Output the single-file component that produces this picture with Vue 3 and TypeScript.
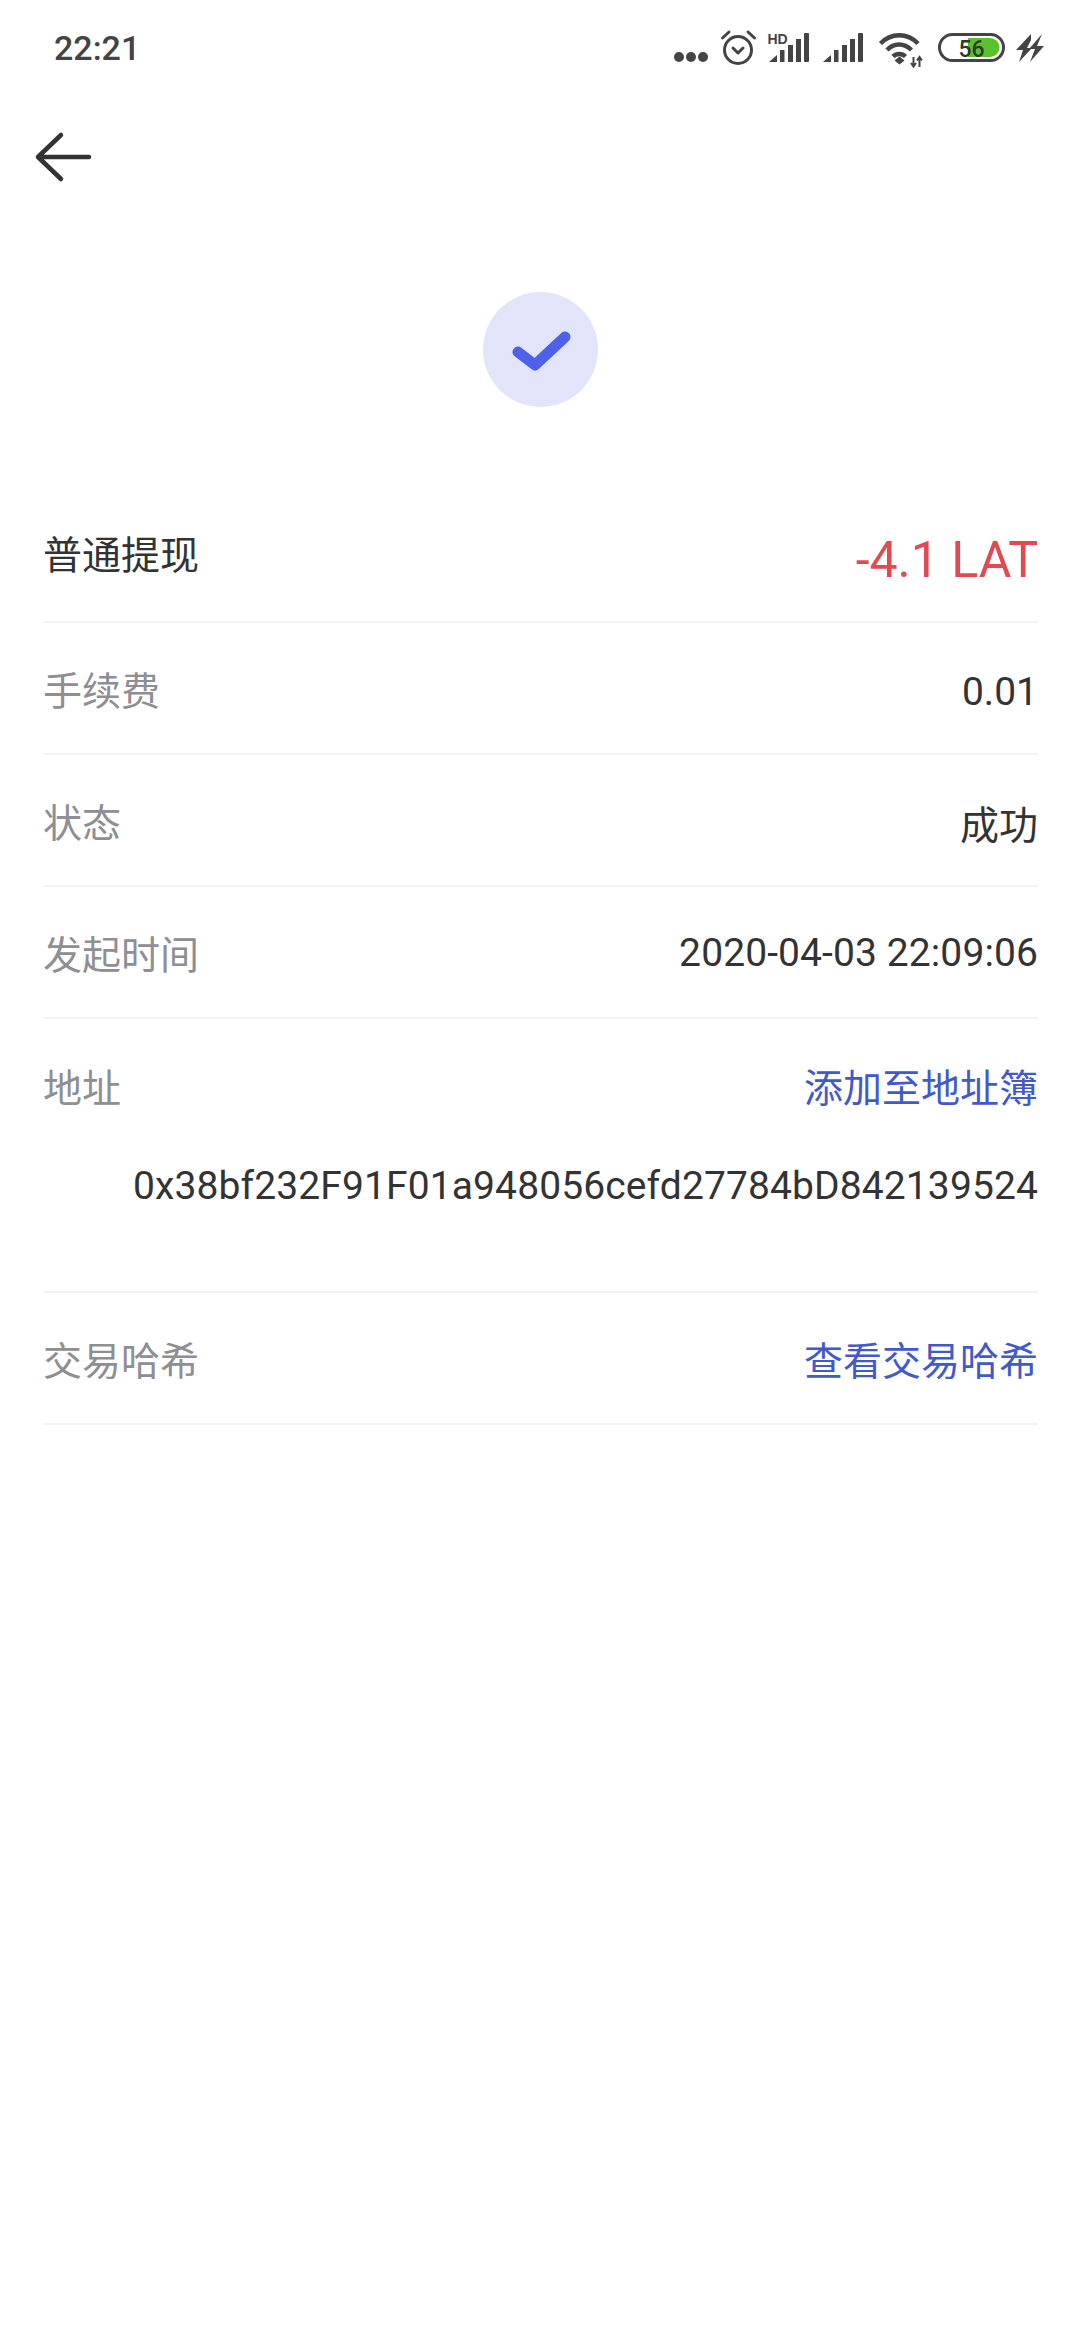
<script setup lang="ts">
interface Row { label: string; value: string; cls: string }
const rows: Row[] = [
  { label: '手续费', value: '0.01', cls: 'fee' },
  { label: '状态', value: '成功', cls: 'state' },
  { label: '发起时间', value: '2020-04-03 22:09:06', cls: 'date' },
]
</script>

<template>
  <div class="page">
    <header class="status">
      <span class="time">22:21</span>
      <svg class="status-icons" width="400" height="60" viewBox="660 18 400 60">
        <g fill="#444">
          <circle cx="679" cy="57" r="5" /><circle cx="691" cy="57" r="5" /><circle cx="703" cy="57" r="5" />
        </g>
        <g fill="none" stroke="#444" stroke-width="3" stroke-linecap="round" stroke-linejoin="round">
          <circle cx="738" cy="50" r="13.500" />
          <path d="M733 48l5 5 5-5" />
          <path d="M722.500 38l6.500-6M754.500 38l-6.500-6" />
        </g>
        <text x="767.500" y="44" class="hd">HD</text>
        <g fill="#444">
          <path d="M769 62l8-7v7z" /><rect x="780" y="50" width="4.500" height="12" /><rect x="788" y="45" width="5" height="17" /><rect x="796" y="39" width="5" height="23" /><rect x="804" y="33" width="5" height="29" rx="1" />
          <path d="M823 62l8-7v7z" /><rect x="834" y="50" width="4.500" height="12" /><rect x="842" y="45" width="5" height="17" /><rect x="850" y="39" width="5" height="23" /><rect x="858" y="33" width="5" height="29" rx="1" />
        </g>
        <g fill="none" stroke="#444" stroke-width="4.500">
          <path d="M880.500 43.500c10.500-11 27-11 37.500 0" />
          <path d="M887 50c7-7.500 17-7.500 24.500 0" />
          <path d="M893 56.500c3.500-3.500 9-3.500 12.500 0" />
        </g>
        <path d="M899.500 56.500l5 4-5 4-5-4z" fill="#444" />
        <path d="M913.500 57v10M919.500 57v10M911 63l2.500 3.500 2.500-3.500M917 60.500l2.500-3.500 2.500 3.500" fill="none" stroke="#444" stroke-width="2" />
        <rect x="939.500" y="34.500" width="64" height="26" rx="13" fill="#fff" stroke="#444" stroke-width="3" />
        <path d="M968 38h22a9.500 9.500 0 0 1 0 19h-22z" fill="#5cc22c" />
        <text x="958.500" y="57" class="batt">56</text>
        <path d="M1031 34l-15 16h7l-4 12 13-14h-5l4-8zM1042 34l-13 15h6l-5 13 14-16h-7z" fill="#444" />
      </svg>
    </header>

    <div class="nav">
      <svg width="60" height="52" viewBox="0 0 60 52" fill="none" stroke="#333" stroke-width="4.500" stroke-linecap="round" stroke-linejoin="round">
        <path d="M55 26H4M27 4L4 26 27 48" />
      </svg>
    </div>

    <div class="result">
      <div class="circle">
        <svg width="62" height="44" viewBox="0 0 62 44" fill="none" stroke="#4f60ea" stroke-width="11" stroke-linecap="round" stroke-linejoin="round">
          <path d="M8 24l17 13L55 9" />
        </svg>
      </div>
    </div>

    <main class="list">
      <div class="row">
        <span class="title">普通提现</span>
        <span class="amount">-4.1 LAT</span>
      </div>
      <div v-for="r in rows" :key="r.label" class="row">
        <span class="label">{{ r.label }}</span>
        <span class="value" :class="r.cls">{{ r.value }}</span>
      </div>
      <div class="row tall">
        <div class="line">
          <span class="label">地址</span>
          <span class="link">添加至地址簿</span>
        </div>
        <div class="address">0x38bf232F91F01a948056cefd27784bD842139524</div>
      </div>
      <div class="row">
        <span class="label">交易哈希</span>
        <span class="link">查看交易哈希</span>
      </div>
    </main>
  </div>
</template>

<style scoped>
.page {
  width: 1080px;
  height: 2340px;
  background: #fff;
  font-family: Roboto, "Noto Sans CJK SC", sans-serif;
  overflow: hidden;
}
.status {
  height: 96px;
  display: flex;
  align-items: center;
  justify-content: space-between;
  padding: 0 20px 0 54px;
  box-sizing: border-box;
}
.time {
  font-size: 34px;
  font-weight: 500;
  color: #444;
}
.status-icons { display: block; }
.hd { font: 700 14px "Liberation Sans", sans-serif; fill: #444; }
.batt { font: 500 23px Roboto, sans-serif; fill: #2c3a2a; }
.nav {
  height: 122px;
  padding-left: 34px;
  display: flex;
  align-items: center;
  box-sizing: border-box;
}
.result {
  display: flex;
  justify-content: center;
  padding-top: 74px;
  height: 273px;
  box-sizing: border-box;
}
.circle {
  width: 115px;
  height: 115px;
  margin-left: 1px;
  border-radius: 50%;
  background: #e2e5fa;
  display: flex;
  align-items: center;
  justify-content: center;
}
.list { padding: 0 42px 0 43px; }
.row {
  height: 132px;
  display: flex;
  align-items: center;
  justify-content: space-between;
  border-bottom: 2px solid #f2f2f2;
  box-sizing: border-box;
}
.row.tall {
  height: 274px;
  display: block;
}
.line {
  height: 132px;
  display: flex;
  align-items: center;
  justify-content: space-between;
}
.title { font-size: 39px; color: #333; margin-bottom: 8px; }
.amount { font-size: 50px; color: #e04a50; margin-top: 8px; }
.label { font-size: 39px; color: #8e8e93; }
.value { font-size: 39px; color: #333; }
.fee { margin-top: 8px; }
.state { margin-top: 4px; }
.date { letter-spacing: 0.1px; margin-top: 2px; }
.link { font-size: 39px; color: #4259cb; }
.address {
  font-size: 39px;
  letter-spacing: 0.11px;
  color: #333;
  text-align: right;
  margin-top: 12px;
}
</style>
